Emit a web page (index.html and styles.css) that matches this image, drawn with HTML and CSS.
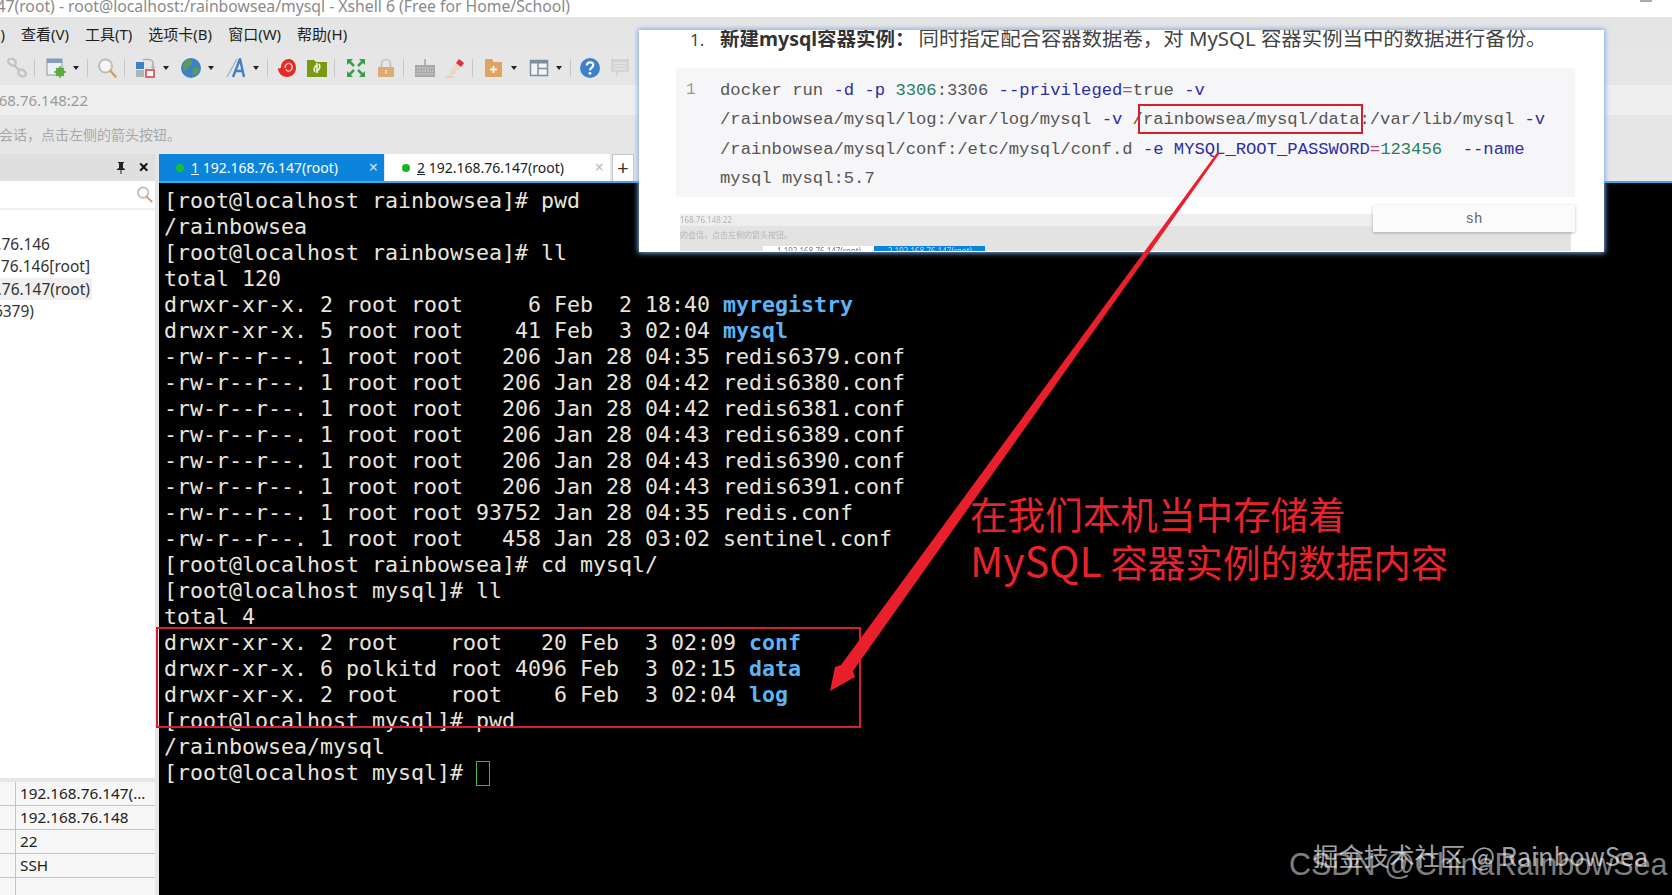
FILE: index.html
```html
<!DOCTYPE html>
<html lang="zh-CN">
<head>
<meta charset="utf-8">
<title>Xshell 6</title>
<link rel="stylesheet" href="styles.css">
</head>
<body>
<div class="app">
  <div class="titlebar"><div class="clip title-clip"><span class="nowrap">192.168.76.147(root) - root@localhost:/rainbowsea/mysql - Xshell 6 (Free for Home/School)</span></div></div>
  <div class="menubar">
    <div class="clip menu-clip"><span class="nowrap">编辑(E)</span></div>
    <span>查看(V)</span><span>工具(T)</span><span>选项卡(B)</span><span>窗口(W)</span><span>帮助(H)</span>
  </div>
  <div class="toolbar">
    <svg class="ic" viewBox="0 0 20 20"><g fill="none" stroke="#c4c4c4" stroke-width="2.4"><rect x="1" y="1" width="8" height="6" rx="3" transform="rotate(40 5 4)"/><rect x="11" y="12" width="8" height="6" rx="3" transform="rotate(40 15 15)"/><path d="M7 7l6 6"/></g></svg>
    <span class="sep"></span>
    <svg class="ic" viewBox="0 0 20 20"><rect x="1" y="1" width="15" height="16" fill="#eef2f6" stroke="#8a97a6"/><rect x="1" y="1" width="15" height="4" fill="#7f9fc6"/><circle cx="14" cy="14" r="4.5" fill="#5cab3c"/><circle cx="14" cy="14" r="1.6" fill="#e8f4e0"/><path d="M14 8v12M8 14h12M10 10l8 8M18 10l-8 8" stroke="#5cab3c" stroke-width="1.3"/></svg>
    <span class="caret"></span>
    <span class="sep sep-c"></span>
    <svg class="ic" viewBox="0 0 20 20"><circle cx="8.5" cy="8" r="6.5" fill="#f6f6f6" stroke="#bdbdbd" stroke-width="2"/><path d="M13.5 13l5 5.5" stroke="#d3a269" stroke-width="2.6" stroke-linecap="round"/></svg>
    <span class="sep"></span>
    <svg class="ic" viewBox="0 0 20 20"><rect x="0" y="4" width="8" height="7" fill="#3f82c4"/><rect x="0" y="12" width="8" height="7" fill="#aeb4ba"/><rect x="10" y="12" width="8" height="7" fill="#fff" stroke="#d8454c" stroke-width="1.6"/><path d="M7 1.5h6a4 4 0 0 1 4 4V10" fill="none" stroke="#a9b2ba" stroke-width="1.6"/><path d="M14.5 8.5h5L17 11.5z" fill="#a9b2ba"/></svg>
    <span class="caret"></span>
    <svg class="ic" viewBox="0 0 20 20"><circle cx="10" cy="10" r="10" fill="#3e80c4"/><path d="M6 2c4-1 6 1 5 4s-4 1-5 5-4 1-4-2 2-6 4-7zM13 10c3-1 5 0 5 2s-3 6-5 5-2-6 0-7z" fill="#5d9b57"/></svg>
    <span class="caret"></span>
    <svg class="ic" viewBox="0 0 20 20"><path d="M1 19L11 1" stroke="#a9b1ba" stroke-width="1.4" fill="none"/><path d="M7 19L14 1l4 18M9.500 13h7" stroke="#3f80c6" stroke-width="2.400" fill="none"/></svg>
    <span class="caret"></span>
    <span class="sep sep-c"></span>
    <svg class="ic" viewBox="0 0 20 20"><path d="M1 10c2 1 3 0 3-1C4 4 8 1 12 1c4 0 7 4 7 9 0 5-4 9-9 9-5 0-9-4-9-9z" fill="#e62a25"/><path d="M8 10c0-3 2-5 4.500-4.500S16 9 14.500 11.500 9.500 14 9 11" fill="none" stroke="#f9cfc4" stroke-width="1.400"/></svg>
    <svg class="ic" viewBox="0 0 20 20"><path d="M0 2h7l2 2h11v15H0z" fill="#7b9a14"/><path d="M8 14c-2-3 0-6 2-7M12 6c2 3 0 6-2 7M10 5v10" fill="none" stroke="#f1f6dd" stroke-width="1.600"/></svg>
    <span class="sep"></span>
    <svg class="ic" viewBox="0 0 20 20"><g fill="none" stroke="#35a048" stroke-width="2.600"><path d="M3 3l5 5M17 3l-5 5M3 17l5-5M17 17l-5-5"/></g><path d="M1 1h6L1 7zM19 1h-6l6 6zM1 19h6l-6-6zM19 19h-6l6-6z" fill="#35a048"/></svg>
    <svg class="ic" viewBox="0 0 20 20"><path d="M5.500 9V6a4.500 4.500 0 0 1 9 0v3" fill="none" stroke="#c9c9c9" stroke-width="2.200"/><rect x="2" y="9" width="16" height="10" rx="1" fill="#dcac6e"/><rect x="9" y="12" width="2" height="4" fill="#f0d6ad"/></svg>
    <span class="sep"></span>
    <svg class="ic" viewBox="0 0 20 20"><rect x="0" y="7" width="20" height="12" fill="#a9a9a9"/><path d="M10 1v6" stroke="#a0a0a0" stroke-width="1.500"/><path d="M2 10h16M2 13h16M2 16h16" stroke="#dedede" stroke-width="1" stroke-dasharray="1.500 1"/></svg>
    <svg class="ic" viewBox="0 0 20 20"><path d="M14 1l5 4-10 11-5 2 2-6z" fill="#ecd9c4"/><path d="M14 1l5 4-3 4-5-4z" fill="#d9333b"/><path d="M0 19h9" stroke="#ecc89c" stroke-width="1.500"/></svg>
    <span class="sep"></span>
    <svg class="ic" viewBox="0 0 20 20"><path d="M1 1h7l2 3h8v15H1z" fill="#dfa463"/><path d="M9.500 8v7M6 11.500h7" stroke="#fbeedc" stroke-width="2"/></svg>
    <span class="caret"></span>
    <svg class="ic" viewBox="0 0 20 20"><rect x="1.500" y="2.500" width="17" height="15" fill="#f1f3f5" stroke="#7d8f9f" stroke-width="1.500"/><rect x="1.500" y="2.500" width="17" height="3" fill="#7d8f9f"/><path d="M9 5v12M9 10.500h9" stroke="#7d8f9f" stroke-width="1.500"/></svg>
    <span class="caret"></span>
    <span class="sep sep-c"></span>
    <svg class="ic" viewBox="0 0 20 20"><circle cx="10" cy="10" r="10" fill="#3f80c8"/><path d="M6.800 7.500c0-4 6.500-4.300 6.500-.5 0 2.500-3.300 2.600-3.300 5.300" fill="none" stroke="#fff" stroke-width="2.200"/><circle cx="10" cy="15.300" r="1.400" fill="#fff"/></svg>
    <svg class="ic" viewBox="0 0 20 20"><path d="M1 1h18v13H9l-3 5v-5H1z" fill="#d4d4d4"/><path d="M4 5h12M4 8h12M4 11h12" stroke="#ececec"/></svg>
  </div>
  <div class="addressbar"><div class="clip addr-clip"><span class="nowrap">ssh://192.168.76.148:22</span></div></div>
  <div class="infobar"><div class="clip info-clip"><span class="nowrap">要添加当前会话，点击左侧的箭头按钮。</span></div></div>

  <div class="main">
    <aside class="side">
      <div class="side-head">
        <svg class="pin" viewBox="0 0 10 12"><path d="M2 0h6v1H7v5l2 1v1H5.500v4h-1V8H1V7l2-1V1H2z" fill="#222"/></svg>
        <span class="side-x">×</span>
      </div>
      <div class="side-search">
        <svg class="search-ic" viewBox="0 0 18 18"><circle cx="7.500" cy="7" r="5.500" fill="#fafafa" stroke="#bcbcbc" stroke-width="1.800"/><path d="M11.500 11.500l5 5" stroke="#d3a269" stroke-width="2.200" stroke-linecap="round"/></svg>
      </div>
      <div class="tree">
        <div class="clip tree-row w1"><span class="nowrap">192.168.76.146</span></div>
        <div class="clip tree-row w2"><span class="nowrap">192.168.76.146[root]</span></div>
        <div class="clip tree-row w3 selected"><span class="nowrap">192.168.76.147(root)</span></div>
        <div class="clip tree-row w4"><span class="nowrap">redis(6379)</span></div>
      </div>
      <div class="props">
        <div class="prop"><span class="k"></span><span class="v">192.168.76.147(...</span></div>
        <div class="prop"><span class="k"></span><span class="v">192.168.76.148</span></div>
        <div class="prop"><span class="k"></span><span class="v">22</span></div>
        <div class="prop"><span class="k"></span><span class="v">SSH</span></div>
        <div class="prop"><span class="k"></span><span class="v"></span></div>
      </div>
    </aside>
    <section class="work">
      <div class="tabs">
        <div class="tab active"><i class="dot"></i><span><u>1</u> 192.168.76.147(root)</span><b class="tab-x">×</b></div>
        <div class="tab"><i class="dot"></i><span><u>2</u> 192.168.76.147(root)</span><b class="tab-x">×</b></div>
        <div class="tab-add">+</div>
      </div>
<pre class="term">[root@localhost rainbowsea]# pwd
/rainbowsea
[root@localhost rainbowsea]# ll
total 120
drwxr-xr-x. 2 root root     6 Feb  2 18:40 <b>myregistry</b>
drwxr-xr-x. 5 root root    41 Feb  3 02:04 <b>mysql</b>
-rw-r--r--. 1 root root   206 Jan 28 04:35 redis6379.conf
-rw-r--r--. 1 root root   206 Jan 28 04:42 redis6380.conf
-rw-r--r--. 1 root root   206 Jan 28 04:42 redis6381.conf
-rw-r--r--. 1 root root   206 Jan 28 04:43 redis6389.conf
-rw-r--r--. 1 root root   206 Jan 28 04:43 redis6390.conf
-rw-r--r--. 1 root root   206 Jan 28 04:43 redis6391.conf
-rw-r--r--. 1 root root 93752 Jan 28 04:35 redis.conf
-rw-r--r--. 1 root root   458 Jan 28 03:02 sentinel.conf
[root@localhost rainbowsea]# cd mysql/
[root@localhost mysql]# ll
total 4
drwxr-xr-x. 2 root    root   20 Feb  3 02:09 <b>conf</b>
drwxr-xr-x. 6 polkitd root 4096 Feb  3 02:15 <b>data</b>
drwxr-xr-x. 2 root    root    6 Feb  3 02:04 <b>log</b>
[root@localhost mysql]# pwd
/rainbowsea/mysql
[root@localhost mysql]# <i class="cursor"></i></pre>
    </section>
  </div>

  <article class="card">
    <p class="lead"><span class="num">1.</span><strong>新建mysql容器实例：</strong><span class="lead-rest">同时指定配合容器数据卷，对 MySQL 容器实例当中的数据进行备份。</span></p>
    <div class="code">
      <span class="ln">1</span>
<pre class="src">docker run <em>-d</em> <em>-p</em> <s>3306</s>:3306 <em>--privileged</em><q>=</q>true <em>-v</em>
/rainbowsea/mysql/log:/var/log/mysql <em>-v</em> /rainbowsea/mysql/data:/var/lib/mysql <em>-v</em>
/rainbowsea/mysql/conf:/etc/mysql/conf.d <em>-e</em> <em>MYSQL_ROOT_PASSWORD</em><q>=</q><s>123456</s>  <em>--name</em>
mysql mysql:5.7</pre>
    </div>
    <div class="mini">
      <div class="mini-addr">168.76.148:22</div>
      <div class="mini-info">的会话，点击左侧的箭头按钮。</div>
      <div class="mini-tabs"><span class="mini-tab">1 192.168.76.147(root)</span><span class="mini-tab on">2 192.168.76.147(root)</span></div>
    </div>
    <div class="lang">sh</div>
  </article>

  <div class="mark mark-data"></div>
  <div class="mark mark-list"></div>
  <svg class="arrow" viewBox="0 0 1672 895"><polygon points="1217.500,152 1219.500,153.500 853,671 855,677 830,691 835,667 841,665" fill="#e9202c"/></svg>
  <div class="note">在我们本机当中存储着<br><span class="note-latin">MySQL</span> 容器实例的数据内容</div>
  <div class="wm wm-csdn">CSDN @ChinaRainbowSea</div>
  <div class="wm wm-jj">掘金技术社区 @ RainbowSea</div>
  <span class="min-mark"></span>
</div>
</body>
</html>
```
FILE: styles.css
```css
* { box-sizing: border-box; }
html, body { margin: 0; padding: 0; background: #000; }
.app {
  position: relative;
  width: 1672px;
  height: 895px;
  overflow: hidden;
  display: flex;
  flex-direction: column;
  background: #e6e6e6;
  font-family: "Noto Sans", "Noto Sans CJK SC", sans-serif;
  color: #222;
}
.nowrap { white-space: nowrap; flex: none; }
.clip { display: flex; justify-content: flex-end; overflow: hidden; }

.titlebar { height: 17px; background: #fff; color: #8a8a8a; font-size: 15.750px; line-height: 13px; overflow: hidden; }
.title-clip { width: 570px; height: 17px; }

.menubar {
  height: 33px;
  display: flex;
  align-items: center;
  gap: 16px;
  font-size: 15px;
  color: #1e1e1e;
  background: #e5e5e5;
}
.menu-clip { width: 5px; }

.toolbar { height: 35px; display: flex; align-items: center; gap: 10px; padding-left: 7px; background: #e6e6e6; }
.ic { width: 20px; height: 20px; flex: none; }
.caret { width: 10px; flex: none; margin-left: -5px; display: flex; justify-content: center; }
.caret::after { content: ""; border: 3.5px solid transparent; border-top: 4px solid #222; border-bottom: 0; }
.sep { width: 1px; height: 18px; flex: none; background: #c8c8c8; margin-left: -3px; margin-right: 1px; }
.sep-c { margin-left: -4px; margin-right: -1px; }

.addressbar { height: 30px; display: flex; align-items: center; background: #eee; color: #9a9a9a; font-size: 15px; }
.addr-clip { width: 88px; }
.infobar { height: 39px; display: flex; align-items: center; background: #e6e6e6; color: #a8a8a8; font-size: 14px; padding-bottom: 2px; }
.info-clip { width: 181px; }

.main { flex: 1; display: flex; min-height: 0; }
.side { width: 155px; display: flex; flex-direction: column; background: #fff; margin-right: 4px; font-size: 15.500px; }
.side-head { height: 27px; background: #dfdfdf; display: flex; align-items: center; justify-content: flex-end; gap: 12px; padding-right: 6px; }
.pin { width: 10px; height: 12px; }
.side-x { font-size: 19px; line-height: 1; color: #111; font-weight: 700; }
.side-search { height: 29px; border-bottom: 2px solid #eee; display: flex; align-items: center; justify-content: flex-end; padding-right: 2px; }
.search-ic { width: 17px; height: 17px; }
.tree { flex: 1; padding-top: 23px; display: flex; flex-direction: column; gap: 0; }
.tree-row { height: 22.300px; line-height: 22px; color: #333; }
.w1 { width: 50px; }
.w2 { width: 90px; }
.w3 { width: 92px; padding-right: 2px; background: #f0f0f0; }
.w4 { width: 34px; }

.props { height: 117px; flex: none; overflow: hidden; border-top: 4px solid #e6e6e6; background: #f7f7f7; }
.prop { height: 24px; display: flex; border-bottom: 1px solid #c4c4c4; font-size: 15.300px; line-height: 22px; color: #222; }
.prop .k { width: 16px; border-right: 1px solid #c4c4c4; flex: none; }
.prop .v { padding-left: 4px; white-space: nowrap; }

.work { flex: 1; min-width: 0; display: flex; flex-direction: column; }
.tabs { height: 29px; display: flex; gap: 1px; background: #e6e6e6; border-bottom: 2px solid #32aee6; }
.tab { width: 225px; height: 27px; display: flex; align-items: center; background: #fff; color: #222; font-size: 14px; padding-left: 17px; position: relative; }
.tab.active { background: #0c84dc; color: #fff; }
.dot { width: 8px; height: 8px; border-radius: 50%; background: #12b51f; margin-right: 7px; flex: none; }
.tab.active .dot { background: #16c02a; }
.tab-x { position: absolute; right: 6px; top: 4px; font-weight: 400; font-size: 16px; line-height: 18px; color: #bbb; }
.tab.active .tab-x { color: #cfe6f8; }
.tab-add { width: 22px; height: 27px; margin-left: 1px; background: #fff; border: 1px solid #c6c6c6; border-bottom: 0; display: flex; align-items: center; justify-content: center; font-size: 20px; line-height: 1; color: #333; }

.term {
  flex: 1;
  margin: 0;
  padding: 5px 0 0 5px;
  background: #000;
  color: #e8e4dc;
  font-family: "DejaVu Sans Mono", monospace;
  font-size: 21.600px;
  line-height: 26px;
  overflow: hidden;
}
.term b { color: #5db4f3; font-weight: 700; }
.cursor { display: inline-block; width: 14px; height: 25px; border: 1px solid #3fb24c; vertical-align: -6px; }

.card {
  position: absolute;
  left: 639px;
  top: 30px;
  width: 965px;
  height: 222px;
  background: #fff;
  box-shadow: 0 0 5px 1px #7fa8e6;
  overflow: hidden;
}
.lead { margin: 0; padding-left: 51px; height: 16px; font-size: 19.500px; line-height: 16px; color: #444; white-space: nowrap; }
.num { display: inline-block; width: 30px; font-size: 17px; }
.lead strong { color: #333; font-weight: 700; }
.lead-rest { margin-left: 4px; font-size: 20.400px; }
.code { margin: 22px 29px 0 37px; height: 129px; background: #f6f6f8; display: flex; padding-top: 8px; }
.ln { width: 44px; padding-left: 10px; flex: none; font-family: "Liberation Mono", monospace; font-size: 16px; line-height: 29.300px; color: #999; }
.src { margin: 0; font-family: "Liberation Mono", monospace; font-size: 17.200px; line-height: 29.300px; color: #555; }
.src em { font-style: normal; color: #2d2da8; }
.src s { text-decoration: none; color: #2b7d62; }
.src q { quotes: none; color: #b0477a; }

.mini { margin: 17px 33px 0 41px; height: 37px; background: #e3e3e3; font-size: 8px; color: #b5b5b5; filter: blur(.4px); }
.mini-addr { height: 12px; line-height: 12px; background: #eee; white-space: nowrap; }
.mini-info { height: 20px; line-height: 18px; white-space: nowrap; }
.mini-tabs { height: 5px; display: flex; padding-left: 83px; overflow: hidden; }
.mini-tab { width: 111px; background: #fff; color: #777; padding-left: 14px; line-height: 10px; white-space: nowrap; }
.mini-tab.on { background: #0c84dc; color: #cde; }

.lang {
  position: absolute;
  left: 734px;
  top: 175px;
  width: 202px;
  height: 27px;
  background: #fbfbfb;
  box-shadow: 0 1px 3px rgba(0,0,0,.25);
  display: flex;
  align-items: center;
  justify-content: center;
  font-family: "Liberation Mono", monospace;
  font-size: 14px;
  color: #666;
}

.mark { position: absolute; border: 2px solid #d3202b; }
.mark-data { left: 1138px; top: 104px; width: 225px; height: 30px; }
.mark-list { left: 156px; top: 627px; width: 705px; height: 101px; }
.arrow { position: absolute; left: 0; top: 0; width: 1672px; height: 895px; pointer-events: none; }

.note {
  position: absolute;
  left: 970px;
  top: 489px;
  font-size: 37.600px;
  line-height: 47px;
  color: #e8232a;
  white-space: nowrap;
  font-family: "Noto Sans CJK SC", "Noto Sans", sans-serif;
}
.note-latin { font-size: 41px; }

.wm { position: absolute; white-space: nowrap; }
.wm-csdn { left: 1289px; top: 846px; font-family: "Liberation Sans", sans-serif; font-size: 30.500px; line-height: 36px; color: rgba(255,255,255,.5); }
.wm-jj { left: 1313px; top: 840px; font-family: "Noto Sans CJK SC", sans-serif; font-size: 25.400px; line-height: 30px; color: rgba(255,255,255,.65); }
.min-mark { position: absolute; left: 1640px; top: 0; width: 12px; height: 2px; background: #aaa; }
```
